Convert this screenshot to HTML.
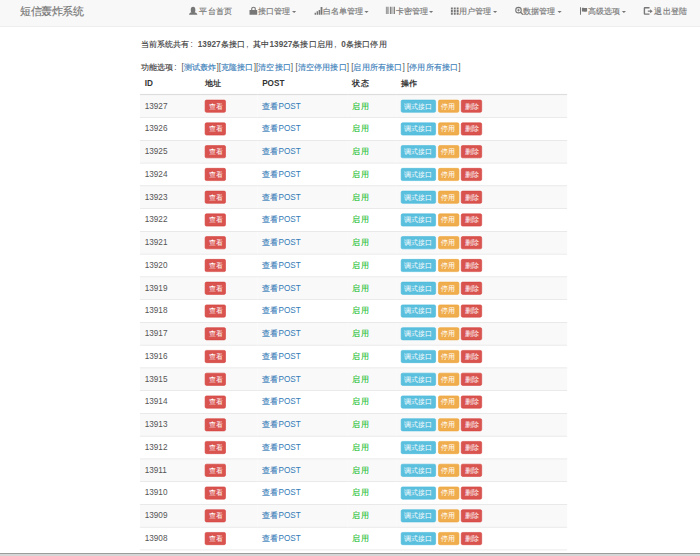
<!DOCTYPE html>
<html><head><meta charset="utf-8">
<style>
html,body{margin:0;padding:0;overflow:hidden;width:700px;height:556px;background:#fff}
#root{position:absolute;left:0;top:0;transform:scale(0.5835);transform-origin:0 0;font-family:"Liberation Sans",sans-serif;font-size:14px;line-height:20px;color:#555;background:#fff;width:1200px;height:953px;overflow:hidden}
*{box-sizing:border-box}
.nav{position:absolute;left:0;top:0;width:1200px;height:46px;background:#f8f8f8;border-bottom:1px solid #e7e7e7}
.brand{position:absolute;left:35px;top:9px;font-size:18px;line-height:20px;color:#777}
.it{position:absolute;top:9px;color:#777;white-space:nowrap;line-height:20px}
.ov{position:absolute;left:0;top:0}
.content{position:absolute;left:241px;top:65px}
.content p{margin:0;height:40px;white-space:nowrap}
a{color:#337ab7;text-decoration:none}
b{font-weight:bold}
table{position:absolute;left:240px;top:125px;width:732px;border-collapse:collapse;border-spacing:0}
th{text-align:left;padding:8.4px 8px 7.6px;color:#333;border-bottom:2px solid #ddd;line-height:20px;font-weight:bold}
td{padding:8px;border-top:1px solid #ddd;line-height:20px;vertical-align:top}
tbody tr:nth-child(odd){background:#f9f9f9}
tbody tr:nth-child(21){background:#fff}
.btn{display:inline-block;color:#fff;font-size:12px;line-height:18px;padding:1px 5px;border:1px solid;border-radius:3px;vertical-align:top}
.bi{background:#5bc0de;border-color:#46b8da}
.bw{background:#f0ad4e;border-color:#eea236}
.bd{background:#d9534f;border-color:#d43f3a}
.on{color:#1cc030}
i.c{font-style:normal;font-weight:500;font-size:14px;letter-spacing:0px;vertical-align:0px;line-height:10px;-webkit-text-stroke:0.2px currentColor}
.content p > i.c, th i.c{color:#333}
th i.c{font-weight:700;-webkit-text-stroke:0px currentColor}
.btn i.c{-webkit-text-stroke:0;font-size:12px;letter-spacing:0px;vertical-align:0px;font-weight:500}
.it i.c{-webkit-text-stroke:0.25px currentColor}
.brand i.c{-webkit-text-stroke:0.25px currentColor;font-size:18px;letter-spacing:0px;vertical-align:0px}
.fp{display:inline-block;width:14px}
.fc{padding-left:1.5px}
.fm{padding-left:2px}
.bar{position:absolute;left:0;top:552.8px;width:700px;height:4px;background:#d6d6d6;border-top:1.3px solid #9c9c9c}
</style></head><body>
<div id="root">
<div class="nav">
<div class="brand"><i class="c">短信轰炸系统</i></div>
<div class="it" style="left:341.7px"><i class="c">平台首页</i></div><div class="it" style="left:441.5px"><i class="c">接口管理</i></div><div class="it" style="left:552.9px"><i class="c">白名单管理</i></div><div class="it" style="left:678.0px"><i class="c">卡密管理</i></div><div class="it" style="left:786.6px"><i class="c">用户管理</i></div><div class="it" style="left:896.3px"><i class="c">数据管理</i></div><div class="it" style="left:1007.7px"><i class="c">高级选项</i></div><div class="it" style="left:1121.5px"><i class="c">退出登陆</i></div>
</div>
<div class="content">
<p><i class="c">当前系统共有</i><span class="fp fc">:</span><b>13927</b><i class="c">条接口</i><span class="fp fm">,</span><i class="c">其中</i><b>13927</b><i class="c">条接口启用</i><span class="fp fm">,</span><b>0</b><i class="c">条接口停用</i></p>
<p><i class="c">功能选项</i><span class="fp fc">:</span>[<a><i class="c">测试轰炸</i></a>][<a><i class="c">克隆接口</i></a>][<a><i class="c">清空接口</i></a>] [<a><i class="c">清空停用接口</i></a>] [<a><i class="c">启用所有接口</i></a>] [<a><i class="c">停用所有接口</i></a>]</p>
</div>
<table><thead><tr><th>ID</th><th><i class="c">地址</i></th><th>POST</th><th><i class="c">状态</i></th><th><i class="c">操作</i></th></tr></thead><tbody>
<tr><td>13927</td><td><span class="btn bd"><i class="c">查看</i></span></td><td><a><i class="c">查看</i>POST</a></td><td class="on"><i class="c">启用</i></td><td><span class="btn bi"><i class="c">调式接口</i></span> <span class="btn bw"><i class="c">停用</i></span> <span class="btn bd"><i class="c">删除</i></span></td></tr>
<tr><td>13926</td><td><span class="btn bd"><i class="c">查看</i></span></td><td><a><i class="c">查看</i>POST</a></td><td class="on"><i class="c">启用</i></td><td><span class="btn bi"><i class="c">调式接口</i></span> <span class="btn bw"><i class="c">停用</i></span> <span class="btn bd"><i class="c">删除</i></span></td></tr>
<tr><td>13925</td><td><span class="btn bd"><i class="c">查看</i></span></td><td><a><i class="c">查看</i>POST</a></td><td class="on"><i class="c">启用</i></td><td><span class="btn bi"><i class="c">调式接口</i></span> <span class="btn bw"><i class="c">停用</i></span> <span class="btn bd"><i class="c">删除</i></span></td></tr>
<tr><td>13924</td><td><span class="btn bd"><i class="c">查看</i></span></td><td><a><i class="c">查看</i>POST</a></td><td class="on"><i class="c">启用</i></td><td><span class="btn bi"><i class="c">调式接口</i></span> <span class="btn bw"><i class="c">停用</i></span> <span class="btn bd"><i class="c">删除</i></span></td></tr>
<tr><td>13923</td><td><span class="btn bd"><i class="c">查看</i></span></td><td><a><i class="c">查看</i>POST</a></td><td class="on"><i class="c">启用</i></td><td><span class="btn bi"><i class="c">调式接口</i></span> <span class="btn bw"><i class="c">停用</i></span> <span class="btn bd"><i class="c">删除</i></span></td></tr>
<tr><td>13922</td><td><span class="btn bd"><i class="c">查看</i></span></td><td><a><i class="c">查看</i>POST</a></td><td class="on"><i class="c">启用</i></td><td><span class="btn bi"><i class="c">调式接口</i></span> <span class="btn bw"><i class="c">停用</i></span> <span class="btn bd"><i class="c">删除</i></span></td></tr>
<tr><td>13921</td><td><span class="btn bd"><i class="c">查看</i></span></td><td><a><i class="c">查看</i>POST</a></td><td class="on"><i class="c">启用</i></td><td><span class="btn bi"><i class="c">调式接口</i></span> <span class="btn bw"><i class="c">停用</i></span> <span class="btn bd"><i class="c">删除</i></span></td></tr>
<tr><td>13920</td><td><span class="btn bd"><i class="c">查看</i></span></td><td><a><i class="c">查看</i>POST</a></td><td class="on"><i class="c">启用</i></td><td><span class="btn bi"><i class="c">调式接口</i></span> <span class="btn bw"><i class="c">停用</i></span> <span class="btn bd"><i class="c">删除</i></span></td></tr>
<tr><td>13919</td><td><span class="btn bd"><i class="c">查看</i></span></td><td><a><i class="c">查看</i>POST</a></td><td class="on"><i class="c">启用</i></td><td><span class="btn bi"><i class="c">调式接口</i></span> <span class="btn bw"><i class="c">停用</i></span> <span class="btn bd"><i class="c">删除</i></span></td></tr>
<tr><td>13918</td><td><span class="btn bd"><i class="c">查看</i></span></td><td><a><i class="c">查看</i>POST</a></td><td class="on"><i class="c">启用</i></td><td><span class="btn bi"><i class="c">调式接口</i></span> <span class="btn bw"><i class="c">停用</i></span> <span class="btn bd"><i class="c">删除</i></span></td></tr>
<tr><td>13917</td><td><span class="btn bd"><i class="c">查看</i></span></td><td><a><i class="c">查看</i>POST</a></td><td class="on"><i class="c">启用</i></td><td><span class="btn bi"><i class="c">调式接口</i></span> <span class="btn bw"><i class="c">停用</i></span> <span class="btn bd"><i class="c">删除</i></span></td></tr>
<tr><td>13916</td><td><span class="btn bd"><i class="c">查看</i></span></td><td><a><i class="c">查看</i>POST</a></td><td class="on"><i class="c">启用</i></td><td><span class="btn bi"><i class="c">调式接口</i></span> <span class="btn bw"><i class="c">停用</i></span> <span class="btn bd"><i class="c">删除</i></span></td></tr>
<tr><td>13915</td><td><span class="btn bd"><i class="c">查看</i></span></td><td><a><i class="c">查看</i>POST</a></td><td class="on"><i class="c">启用</i></td><td><span class="btn bi"><i class="c">调式接口</i></span> <span class="btn bw"><i class="c">停用</i></span> <span class="btn bd"><i class="c">删除</i></span></td></tr>
<tr><td>13914</td><td><span class="btn bd"><i class="c">查看</i></span></td><td><a><i class="c">查看</i>POST</a></td><td class="on"><i class="c">启用</i></td><td><span class="btn bi"><i class="c">调式接口</i></span> <span class="btn bw"><i class="c">停用</i></span> <span class="btn bd"><i class="c">删除</i></span></td></tr>
<tr><td>13913</td><td><span class="btn bd"><i class="c">查看</i></span></td><td><a><i class="c">查看</i>POST</a></td><td class="on"><i class="c">启用</i></td><td><span class="btn bi"><i class="c">调式接口</i></span> <span class="btn bw"><i class="c">停用</i></span> <span class="btn bd"><i class="c">删除</i></span></td></tr>
<tr><td>13912</td><td><span class="btn bd"><i class="c">查看</i></span></td><td><a><i class="c">查看</i>POST</a></td><td class="on"><i class="c">启用</i></td><td><span class="btn bi"><i class="c">调式接口</i></span> <span class="btn bw"><i class="c">停用</i></span> <span class="btn bd"><i class="c">删除</i></span></td></tr>
<tr><td>13911</td><td><span class="btn bd"><i class="c">查看</i></span></td><td><a><i class="c">查看</i>POST</a></td><td class="on"><i class="c">启用</i></td><td><span class="btn bi"><i class="c">调式接口</i></span> <span class="btn bw"><i class="c">停用</i></span> <span class="btn bd"><i class="c">删除</i></span></td></tr>
<tr><td>13910</td><td><span class="btn bd"><i class="c">查看</i></span></td><td><a><i class="c">查看</i>POST</a></td><td class="on"><i class="c">启用</i></td><td><span class="btn bi"><i class="c">调式接口</i></span> <span class="btn bw"><i class="c">停用</i></span> <span class="btn bd"><i class="c">删除</i></span></td></tr>
<tr><td>13909</td><td><span class="btn bd"><i class="c">查看</i></span></td><td><a><i class="c">查看</i>POST</a></td><td class="on"><i class="c">启用</i></td><td><span class="btn bi"><i class="c">调式接口</i></span> <span class="btn bw"><i class="c">停用</i></span> <span class="btn bd"><i class="c">删除</i></span></td></tr>
<tr><td>13908</td><td><span class="btn bd"><i class="c">查看</i></span></td><td><a><i class="c">查看</i>POST</a></td><td class="on"><i class="c">启用</i></td><td><span class="btn bi"><i class="c">调式接口</i></span> <span class="btn bw"><i class="c">停用</i></span> <span class="btn bd"><i class="c">删除</i></span></td></tr>
<tr><td>13907</td><td><span class="btn bd"><i class="c">查看</i></span></td><td><a><i class="c">查看</i>POST</a></td><td class="on"><i class="c">启用</i></td><td><span class="btn bi"><i class="c">调式接口</i></span> <span class="btn bw"><i class="c">停用</i></span> <span class="btn bd"><i class="c">删除</i></span></td></tr>
</tbody></table>
</div>
<svg class="ov" width="700" height="30" viewBox="0 0 700 30" fill="#777"><ellipse cx="193.05" cy="9.9" rx="2.3" ry="3.2"/><path d="M189.0 14.8C189.2 13.4 190.2 12.6 191.6 12.3L194.5 12.3C195.9 12.6 197.1 13.4 197.4 14.8Z"/><path d="M249.5 9.9h7.7v4.9h-7.7z"/><path d="M251.2 9.9V8.6a2.3 1.9 0 0 1 4.6 0V9.9h-1.1V8.7a1.2 1 0 0 0-2.4 0V9.9z"/><path d="M314.6 12.8h1.4v2h-1.4zM316.6 11.3h1.4v3.5h-1.4zM318.6 9.9h1.5v4.9h-1.5zM320.6 7.0h1.8v7.8h-1.8z"/><path d="M385.9 6.7h0.8v7.2h-0.8zM387.3 6.7h0.6v7.2h-0.6zM388.5 6.7h0.5v7.2h-0.5zM389.9 6.7h1.0v7.2h-1.0zM391.5 6.7h0.6v7.2h-0.6zM392.7 6.7h0.7v7.2h-0.7zM394.1 6.7h0.9v7.2h-0.9z"/><path d="M450.9 7.4h1.9v2.1h-1.9zM453.8 7.4h1.9v2.1h-1.9zM456.7 7.4h1.9v2.1h-1.9zM450.9 10.0h1.9v2.1h-1.9zM453.8 10.0h1.9v2.1h-1.9zM456.7 10.0h1.9v2.1h-1.9zM450.9 12.6h1.9v2.1h-1.9zM453.8 12.6h1.9v2.1h-1.9zM456.7 12.6h1.9v2.1h-1.9z"/><circle cx="518.5" cy="10.15" r="2.75" fill="none" stroke="#777" stroke-width="1.1"/><path d="M520.6 12.2L523.0 14.6" stroke="#777" stroke-width="1.3" fill="none"/><path d="M518.1 8.7h0.8v1.05h1.05v0.8h-1.05v1.05h-0.8v-1.05h-1.05v-0.8h1.05z"/><path d="M580.0 7.3h1v7.5h-1zM581.9 7.9C583.5 7.4 585.5 8.4 587.1 7.9V11.6C585.5 12.1 583.5 11.1 581.9 11.6z"/><path d="M649.5 7.0h-4.6a1.2 1.2 0 0 0-1.2 1.2v5.4a1.2 1.2 0 0 0 1.2 1.2h4.6v-1.4h-4.4v-5.0h4.4z"/><path d="M647.8 10.6h2.3v-1.4l2.6 2.0-2.6 2.0v-1.4h-2.3z"/><path d="M292.0 10.9h4.2l-2.1 2.2z"/><path d="M364.4 10.9h4.2l-2.1 2.2z"/><path d="M429.0 10.9h4.2l-2.1 2.2z"/><path d="M493.0 10.9h4.2l-2.1 2.2z"/><path d="M557.5 10.9h4.2l-2.1 2.2z"/><path d="M621.8 10.9h4.2l-2.1 2.2z"/></svg>
<div class="bar"></div>
</body></html>
